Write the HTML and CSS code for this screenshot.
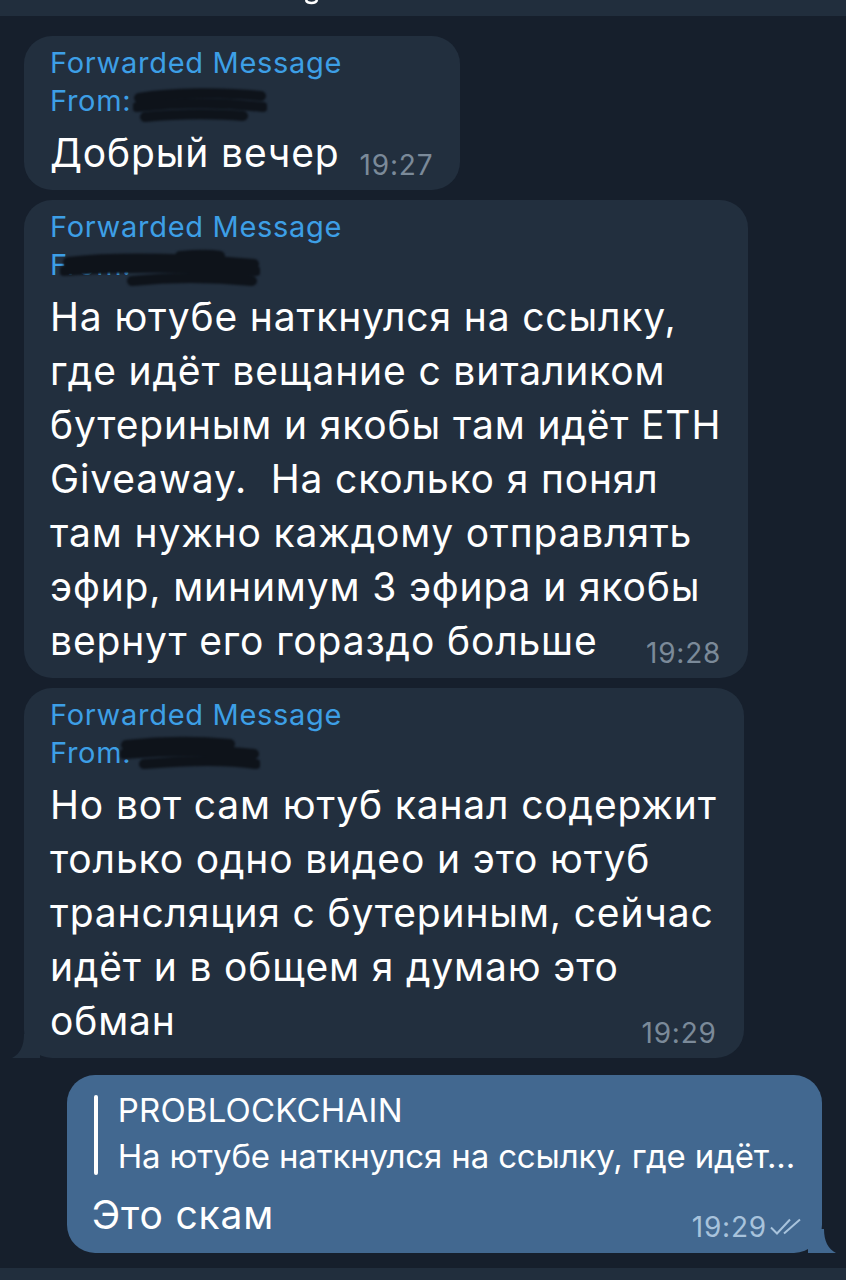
FILE: index.html
```html
<!DOCTYPE html>
<html lang="ru">
<head>
    <meta charset="UTF-8">
    <meta name="viewport" content="width=device-width, initial-scale=1.0">
    <title>Chat</title>
    <link rel="stylesheet" href="styles.css">
</head>
<body>
    <div id="chat">
        <div id="topBar">
            <svg class="top-glyph" viewBox="0 0 14 6"><path d="M1 0 C2 4 11 4 12 0" /></svg>
        </div>

        <div id="messages">
            <div class="bubble incoming">
                <div class="fwd-block">
                    <div class="fwd">Forwarded Message</div>
                    <div class="fwd">From: <svg class="scribble s1" viewBox="0 0 134 40"><path d="M6 12 C40 6 90 6 128 10 M4 21 C50 16 95 17 130 21 M12 31 C50 27 90 28 110 30" /></svg></div>
                </div>
                <div class="last-line">
                    <span class="text">Добрый вечер</span>
                    <span class="time">19:27</span>
                </div>
            </div>

            <div class="bubble incoming">
                <div class="fwd-block">
                    <div class="fwd">Forwarded Message</div>
                    <div class="fwd">From: <svg class="scribble s2" viewBox="0 0 200 40"><path d="M8 14 C60 8 120 10 194 16 M4 23 C60 19 130 19 196 23 M120 8 C140 6 150 6 160 8 M72 33 C110 29 150 29 192 33" /></svg></div>
                </div>
                <div class="text">На ютубе наткнулся на ссылку,<br>где идёт вещание с виталиком<br>бутериным и якобы там идёт ETH<br>Giveaway.&nbsp; На сколько я понял<br>там нужно каждому отправлять<br>эфир, минимум 3 эфира и якобы</div>
                <div class="last-line">
                    <span class="text">вернут его гораздо больше</span>
                    <span class="time">19:28</span>
                </div>
            </div>

            <div class="bubble incoming tail-left">
                <div class="fwd-block">
                    <div class="fwd">Forwarded Message</div>
                    <div class="fwd">From. <svg class="scribble s3" viewBox="0 0 140 36"><path d="M6 9 C40 5 80 5 110 8 M4 18 C50 14 100 14 134 18 M24 28 C70 24 110 24 136 28" /></svg></div>
                </div>
                <div class="text">Но вот сам ютуб канал содержит<br>только одно видео и это ютуб<br>трансляция с бутериным, сейчас<br>идёт и в общем я думаю это</div>
                <div class="last-line">
                    <span class="text">обман</span>
                    <span class="time">19:29</span>
                </div>
            </div>

            <div class="bubble outgoing tail-right">
                <div class="reply">
                    <div class="reply-name">PROBLOCKCHAIN</div>
                    <div class="reply-text">На ютубе наткнулся на ссылку, где идёт...</div>
                </div>
                <div class="last-line">
                    <span class="text">Это скам</span>
                    <span class="time">19:29<svg class="checks" viewBox="0 0 34 20"><path d="M2 10.5 L8 16.5 L21 2.5 M15 16.5 L31 2.5" /></svg></span>
                </div>
            </div>
        </div>

        <div id="bottomBar"></div>
    </div>
</body>
</html>
```

FILE: styles.css
```css
body {
    margin: 0;
    padding: 0;
    background: #161f2c;
    color: #fff;
    font-family: 'Inter', 'Liberation Sans', sans-serif;
}

#chat {
    width: 846px;
    height: 1280px;
    display: flex;
    flex-direction: column;
    overflow: hidden;
}

#topBar {
    height: 16px;
    background: #212e3d;
    position: relative;
}

.top-glyph {
    position: absolute;
    left: 305px;
    top: 0;
    width: 14px;
    height: 6px;
    fill: none;
    stroke: #fff;
    stroke-width: 2.5;
}

#messages {
    flex: 1;
    display: flex;
    flex-direction: column;
    gap: 10px;
    padding: 20px 24px 0 24px;
}

#bottomBar {
    height: 12px;
    background: #212e3d;
}

.bubble {
    position: relative;
    align-self: flex-start;
    border-radius: 28px;
    padding: 8px 27px 10px 26px;
    font-size: 39px;
    line-height: 54px;
    letter-spacing: 0.85px;
}

.incoming {
    background: #222f3e;
}

.fwd-block {
    margin-bottom: 6px;
}

.fwd {
    color: #3d9fe6;
    font-size: 29px;
    line-height: 38px;
    letter-spacing: 0.7px;
    position: relative;
}

.scribble {
    position: absolute;
    top: 4px;
    height: 40px;
    fill: none;
    stroke: #0e131a;
    stroke-width: 10;
    stroke-linecap: round;
    filter: blur(1.2px);
}

.s1 {
    left: 83px;
    width: 134px;
}

.s2 {
    left: 10px;
    width: 200px;
    top: 2px;
}

.s3 {
    left: 70px;
    width: 140px;
    height: 36px;
    top: 2px;
}

.last-line {
    display: flex;
    justify-content: space-between;
    align-items: flex-end;
    gap: 20px;
}

.time {
    font-size: 28px;
    line-height: 30px;
    letter-spacing: 0.8px;
    color: #7b8a99;
    white-space: nowrap;
}

.outgoing {
    align-self: flex-end;
    background: #426890;
    padding: 12px 27px 11px 25px;
    margin-top: 7px;
}

.outgoing .time {
    color: #a8c3dc;
    display: flex;
    align-items: center;
    margin-right: -8px;
}

.checks {
    width: 34px;
    height: 20px;
    margin-left: 2px;
    fill: none;
    stroke: #a8c3dc;
    stroke-width: 2;
}

.reply {
    position: relative;
    margin-left: 2px;
    padding-left: 24px;
    margin-bottom: 9px;
    font-size: 33px;
    line-height: 46px;
    letter-spacing: 0.2px;
}

.reply-text {
    letter-spacing: -0.15px;
}

.reply::before {
    content: "";
    position: absolute;
    left: 0;
    top: 8px;
    bottom: 4px;
    width: 4px;
    border-radius: 2px;
    background: #fff;
}

.tail-left::before {
    content: "";
    position: absolute;
    left: -12px;
    bottom: 0;
    width: 28px;
    height: 24px;
    background: #222f3e;
    clip-path: path('M28 0 L12 0 C12 12 8 20 0 24 L28 24 Z');
}

.tail-right::after {
    content: "";
    position: absolute;
    right: -14px;
    bottom: 0;
    width: 28px;
    height: 24px;
    background: #426890;
    clip-path: path('M0 0 L16 0 C16 12 20 20 28 24 L0 24 Z');
}
```
